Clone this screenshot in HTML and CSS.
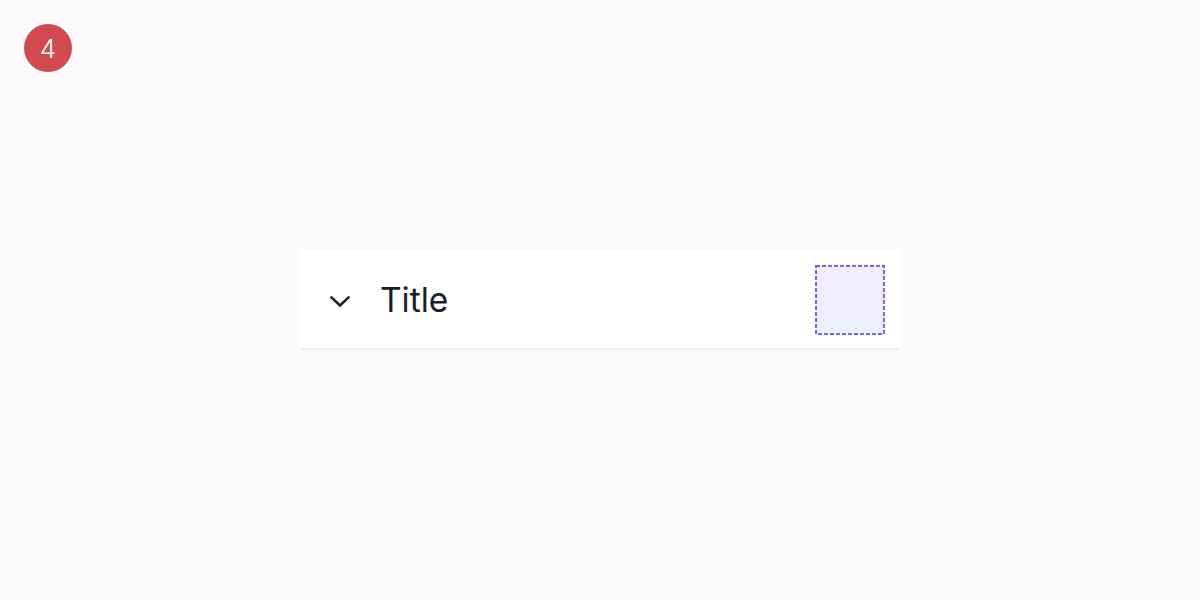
FILE: index.html
```html
<!DOCTYPE html>
<html>
<head>
<meta charset="utf-8">
<link rel="stylesheet" href="styles.css">
</head>
<body>
<div class="page">
  <div class="badge">4</div>
  <div class="stage">
    <div class="card">
      <span class="chevron">
        <svg width="24" height="24" viewBox="0 0 24 24" fill="none" stroke="#1e1d2b" stroke-width="2.5" stroke-linecap="square" stroke-linejoin="miter"><path d="M3.5 9.5l8.5 8 8.5-8"/></svg>
      </span>
      <span class="title">Title</span>
      <svg class="slot" width="70" height="70" viewBox="0 0 70 70"><rect x="1" y="1" width="68" height="68" fill="#efeefc" stroke="#6d66e8" stroke-width="2" stroke-dasharray="4 2"/></svg>
    </div>
  </div>
</div>
</body>
</html>
```
FILE: styles.css
```css
html, body {
  margin: 0;
  padding: 0;
  background: #fafafa;
  font-family: "Inter", "Noto Sans", sans-serif;
}
.page {
  position: relative;
  width: 1200px;
  height: 600px;
}
.badge {
  position: absolute;
  left: 24px;
  top: 24px;
  width: 48px;
  height: 48px;
  border-radius: 50%;
  background: #d14a4f;
  color: #fff;
  font-size: 26px;
  font-weight: 300;
  display: flex;
  align-items: center;
  justify-content: center;
}
.stage {
  height: 600px;
  display: flex;
  align-items: center;
  justify-content: center;
}
.card {
  width: 600px;
  height: 100px;
  box-sizing: border-box;
  background: #fff;
  box-shadow: inset 0 -2px 0 #edecf4;
  display: flex;
  align-items: center;
  padding: 0 15px 0 28px;
}
.chevron {
  width: 24px;
  height: 24px;
  display: flex;
}
.title {
  flex: 1;
  margin-left: 28px;
  font-size: 33.5px;
  color: #1e1d2b;
  line-height: 1.2;
}
.slot {
  display: block;
  flex: none;
}
```
